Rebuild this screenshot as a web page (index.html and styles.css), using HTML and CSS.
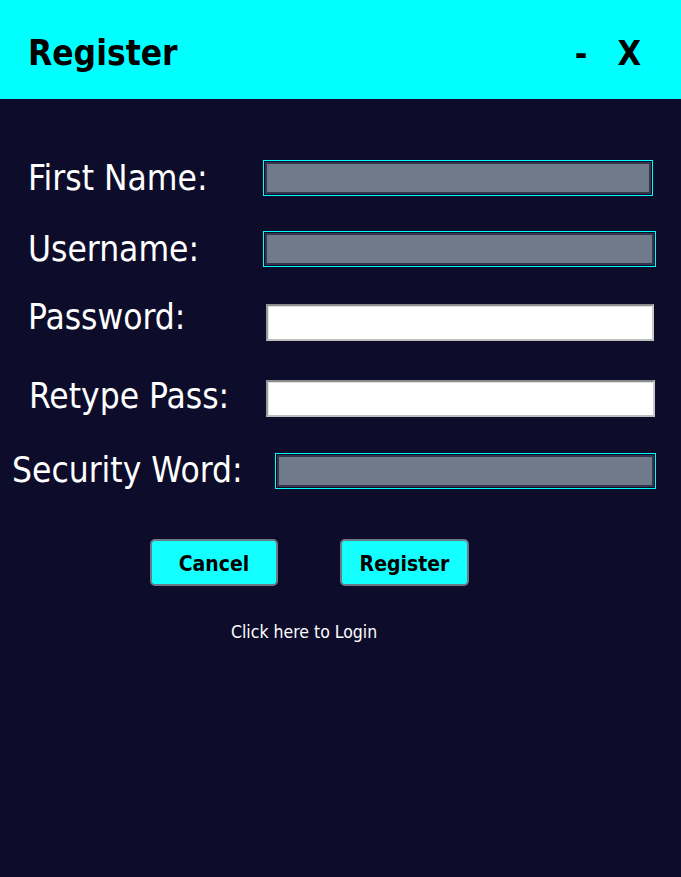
FILE: index.html
```html
<!DOCTYPE html>
<html>
<head>
<meta charset="utf-8">
<link rel="stylesheet" href="styles.css">
</head>
<body>
<div class="window">
  <header class="titlebar">
    <h1 class="title">Register</h1>
    <div class="controls"><span class="min">-</span><span class="close">X</span></div>
  </header>
  <main class="form">
    <div class="row row-first"><label class="label">First Name:</label><input class="field field-dark" type="text"></div>
    <div class="row row-user"><label class="label">Username:</label><input class="field field-dark" type="text"></div>
    <div class="row row-pass"><label class="label">Password:</label><input class="field field-light" type="password"></div>
    <div class="row row-retype"><label class="label">Retype Pass:</label><input class="field field-light" type="password"></div>
    <div class="row row-sec"><label class="label">Security Word:</label><input class="field field-dark" type="text"></div>
    <div class="buttons">
      <button class="btn btn-cancel">Cancel</button>
      <button class="btn btn-register">Register</button>
    </div>
    <a class="login-link">Click here to Login</a>
  </main>
</div>
</body>
</html>
```
FILE: styles.css
```css
html, body {
  margin: 0;
  padding: 0;
  background: #0d0d2b;
}
body {
  width: 681px;
  height: 877px;
  overflow: hidden;
  font-family: "DejaVu Sans Condensed", "DejaVu Sans", sans-serif;
}
.titlebar {
  height: 99px;
  background: #00ffff;
  display: flex;
  align-items: center;
  justify-content: space-between;
  padding: 6px 40px 0 28px;
  box-sizing: border-box;
}
.title {
  margin: 0;
  font-size: 35px;
  font-weight: bold;
  color: #000;
}
.controls {
  display: flex;
  gap: 30px;
  font-size: 34px;
  font-weight: bold;
  color: #000;
}
.form {
  display: flex;
  flex-direction: column;
  padding-top: 61px;
}
.row {
  display: flex;
  align-items: center;
  height: 36px;
}
.label {
  color: #fff;
  font-size: 35px;
  line-height: 36px;
  white-space: nowrap;
}
.field {
  appearance: none;
  box-sizing: border-box;
  height: 36px;
  margin: 0;
  padding: 0;
  outline: none;
}
.field-dark {
  background: #6f7b8a;
  border: 1px solid #00ffff;
  box-shadow: inset 0 0 0 1px #0d0d2b, inset 0 0 0 3px #34364c;
}
.field-light {
  background: #fff;
  border: 2px solid;
  border-color: #8c8c8c #c9c9c9 #bdbdbd #9a9a9a;
  box-shadow: inset 0 1px 0 #e2e2e2, inset 1px 0 0 #e8e8e8;
  height: 37px;
}
.row-first { padding-left: 28px; }
.row-first .label { width: 235px; }
.row-first .field { width: 390px; }

.row-user { padding-left: 28px; margin-top: 35px; }
.row-user .label { width: 235px; }
.row-user .field { width: 393px; }

.row-pass { padding-left: 28px; margin-top: 37px; }
.row-pass .label { width: 238px; margin-top: -10px; }
.row-pass .field { width: 388px; }

.row-retype { padding-left: 29px; margin-top: 40px; }
.row-retype .label { width: 237px; margin-top: -4px; }
.row-retype .field { width: 389px; }

.row-sec { padding-left: 12px; margin-top: 37px; }
.row-sec .label { width: 263px; margin-top: -3px; }
.row-sec .field { width: 381px; }

.buttons {
  display: flex;
  gap: 62px;
  padding-left: 150px;
  margin-top: 50px;
}
.btn {
  width: 128px;
  height: 47px;
  background: #14ffff;
  border: 2px solid #6b7a88;
  border-radius: 5px;
  font-family: inherit;
  font-size: 21px;
  font-weight: bold;
  color: #000;
  padding: 3px 0 0;
}
.btn-register { width: 129px; }
.login-link {
  display: block;
  margin-top: 36px;
  padding-left: 231px;
  color: #fff;
  font-size: 17.5px;
}
```
